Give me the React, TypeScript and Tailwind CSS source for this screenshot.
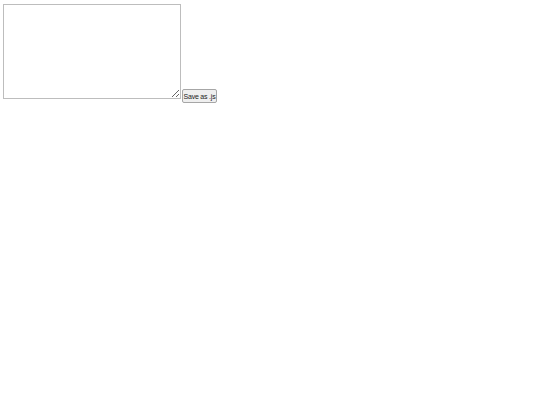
import React from 'react';

const App: React.FC = () => {
  return (
    <div className="flex items-start pl-[3px] pt-[4px] font-['Liberation_Sans',Arial,sans-serif]">
      <textarea className="w-[178px] h-[95px] shrink-0 border border-[#bdbdbd] bg-white resize-both outline-none" />
      <button className="ml-[1px] mt-[85px] h-[14px] w-[35px] shrink-0 flex items-center justify-center whitespace-nowrap px-0 border border-[#a6a6a6] bg-[#efefef] rounded-[2px] text-[7px] leading-none text-[#222] tracking-[-0.2px]">
        Save as .js
      </button>
    </div>
  );
};

export default App;
